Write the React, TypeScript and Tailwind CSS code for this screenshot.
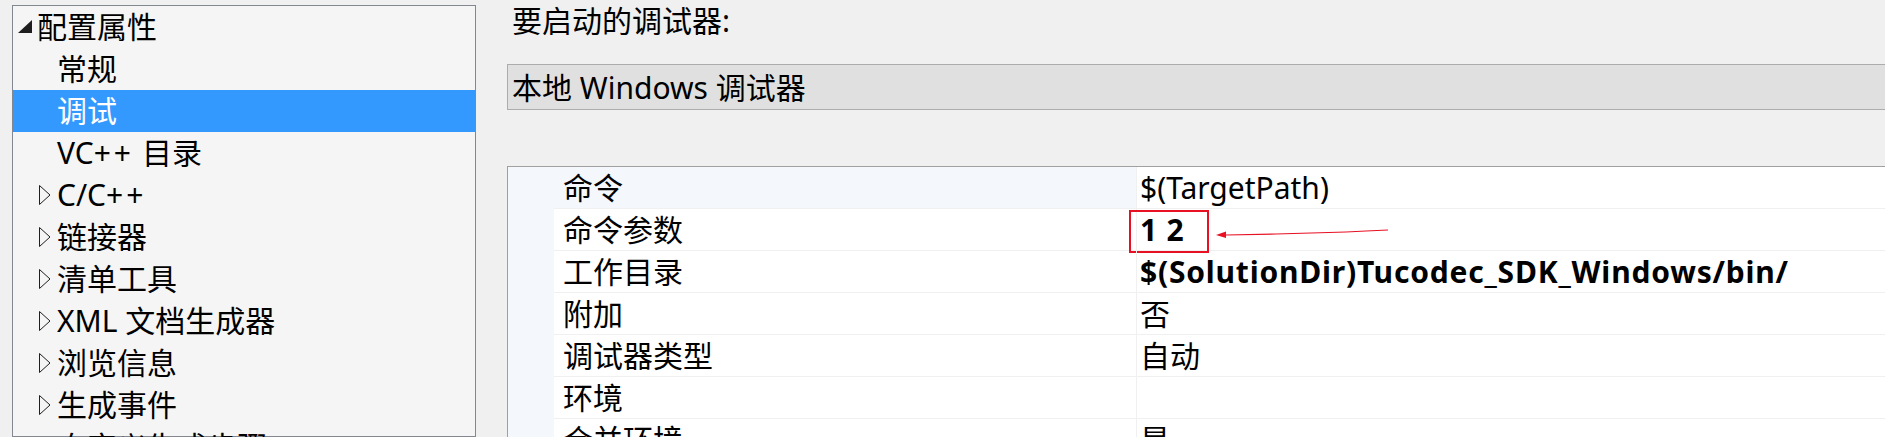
import React from "react";

const font = { fontFamily: "'Noto Sans', 'Noto Sans CJK SC', sans-serif" };

type TreeItem = { label: React.ReactNode; key: string; depth: "root" | "child" | "group"; selected?: boolean };

const plus = <span className="tracking-[3px]">++</span>;

const tree: TreeItem[] = [
  { key: "cfg", label: "配置属性", depth: "root" },
  { key: "gen", label: "常规", depth: "child" },
  { key: "dbg", label: "调试", depth: "child", selected: true },
  {
    key: "vc",
    label: (
      <>
        VC{plus}
        <span className="ml-[8px]">目录</span>
      </>
    ),
    depth: "child",
  },
  { key: "cc", label: <>C/C{plus}</>, depth: "group" },
  { key: "link", label: "链接器", depth: "group" },
  { key: "mt", label: "清单工具", depth: "group" },
  { key: "xml", label: "XML 文档生成器", depth: "group" },
  { key: "bsc", label: "浏览信息", depth: "group" },
  { key: "evt", label: "生成事件", depth: "group" },
  { key: "cust", label: "自定义生成步骤", depth: "group" },
];

const props: { name: string; value: string; bold?: boolean }[] = [
  { name: "命令", value: "$(TargetPath)" },
  { name: "命令参数", value: "1 2", bold: true },
  { name: "工作目录", value: "$(SolutionDir)Tucodec_SDK_Windows/bin/", bold: true },
  { name: "附加", value: "否" },
  { name: "调试器类型", value: "自动" },
  { name: "环境", value: "" },
  { name: "合并环境", value: "是" },
];

function Expanded() {
  return (
    <svg width="16" height="14" viewBox="0 0 16 14" className="shrink-0">
      <polygon points="15,0 15,13 1,13" fill="#1e1e1e" />
    </svg>
  );
}

function Collapsed() {
  return (
    <svg width="12" height="20" viewBox="0 0 12 20" className="shrink-0">
      <polygon points="0.5,0.5 11,10 0.5,19.5" fill="none" stroke="#1e1e1e" strokeWidth="1" />
    </svg>
  );
}

function TreeRow({ item }: { item: TreeItem }) {
  const base = "flex h-[42px] items-center text-[30px] leading-[42px] whitespace-nowrap";
  const tone = item.selected ? "bg-[#3399ff] text-white" : "text-black";
  if (item.depth === "root") {
    return (
      <div className={`${base} ${tone} pl-[4px]`}>
        <Expanded />
        <span className="ml-[4px]">{item.label}</span>
      </div>
    );
  }
  if (item.depth === "group") {
    return (
      <div className={`${base} ${tone} pl-[26px]`}>
        <Collapsed />
        <span className="ml-[6px]">{item.label}</span>
      </div>
    );
  }
  return <div className={`${base} ${tone} pl-[44px]`}>{item.label}</div>;
}

export default function App() {
  return (
    <div className="flex h-[437px] w-[1885px] overflow-hidden bg-[#f0f0f0]" style={font}>
      {/* category tree */}
      <div className="ml-[12px] mt-[5px] w-[464px] shrink-0 border border-[#828790] bg-[#f5f5f5]">
        {tree.map((t) => (
          <TreeRow key={t.key} item={t} />
        ))}
      </div>

      {/* debugger page */}
      <div className="ml-[31px] flex min-w-0 flex-1 flex-col">
        <div className="h-[42px] pl-[5px] text-[30px] leading-[42px] text-black">要启动的调试器:</div>

        <div className="mt-[22px] flex h-[46px] items-center border-y border-l border-[#acacac] bg-[#e0e0e0] pl-[4px] text-[30px] text-black">
          本地 Windows 调试器
        </div>

        <div className="mt-[56px] flex-1 border-l border-t border-[#a0a0a0] bg-white">
          {props.map((p, i) => (
            <div key={p.name} className="flex h-[42px]">
              <div className="w-[46px] shrink-0 bg-[#f4f7fc]" />
              <div
                className={`flex w-[582px] shrink-0 items-center border-b border-[#f0f0f0] pl-[9px] text-[30px] leading-[42px] text-black ${
                  i === 0 ? "bg-[#f4f7fc]" : "bg-white"
                }`}
              >
                {p.name}
              </div>
              <div
                className={`relative flex flex-1 items-center border-b border-l border-[#f0f0f0] pl-[3px] text-[30px] leading-[42px] text-black whitespace-nowrap ${
                  p.bold ? "font-bold tracking-[0.8px]" : ""
                }`}
              >
                {p.value}
                {i === 1 && (
                  <>
                    <div className="pointer-events-none absolute left-[-8px] top-[1px] h-[43px] w-[80px] border-2 border-[#e81123]" />
                    <svg
                      className="pointer-events-none absolute left-[79px] top-[15px]"
                      width="174"
                      height="14"
                      viewBox="0 0 174 14"
                    >
                      <polyline
                        points="10,11 60,10 95,9 130,8 150,7 172,6"
                        fill="none"
                        stroke="#e81123"
                        strokeWidth="1.2"
                      />
                      <polygon points="0,11 10,7.5 10,14" fill="#e81123" />
                    </svg>
                  </>
                )}
              </div>
            </div>
          ))}
        </div>
      </div>
    </div>
  );
}
